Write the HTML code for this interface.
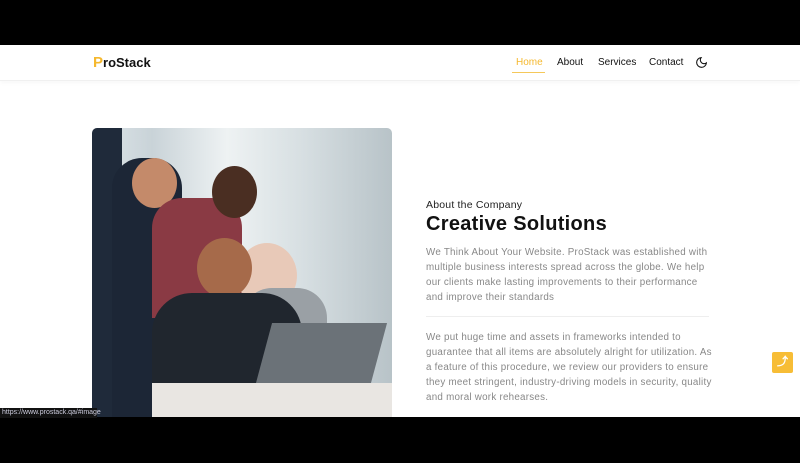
<!DOCTYPE html>
<html><head><meta charset="utf-8"><style>
*{margin:0;padding:0;box-sizing:border-box}
body{width:800px;height:463px;background:#000;position:relative;overflow:hidden;font-family:"Liberation Sans",sans-serif}
.page{position:absolute;top:45px;left:0;width:800px;height:372px;background:#fff;overflow:hidden}
.nav{height:36px;border-bottom:1px solid #f0f0f0;box-shadow:0 2px 4px rgba(0,0,0,.03);position:relative}
.logo{position:absolute;left:93px;top:9px;font-weight:bold;font-size:13px;color:#111}
.logo b{color:#f5b82e;font-size:15px}
.links{position:absolute;top:12px;font-size:10px;color:#111}
.links span{position:absolute;white-space:nowrap}
.img{position:absolute;left:92px;top:83px;width:300px;height:300px;border-radius:5px 5px 0 0;overflow:hidden;
background:linear-gradient(90deg,#dfe6ea 0%,#c9d3d8 20%,#eef2f3 45%,#d7dfe2 70%,#b8c3c8 100%)}
.t{position:absolute;left:426px;color:#888;font-size:9.8px;line-height:15px;white-space:nowrap;letter-spacing:.25px}
</style></head><body>
<div class="page">
<div class="nav">
<div class="logo"><b>P</b>roStack</div>
<div class="links">
<span style="left:516px;color:#f5b82e">Home</span>
<span style="left:557px">About</span>
<span style="left:598px">Services</span>
<span style="left:649px">Contact</span>
</div>
<div style="position:absolute;left:512px;top:27px;width:33px;height:1px;background:#f5c85a"></div>
<svg style="position:absolute;left:695px;top:11px" width="13" height="13" viewBox="0 0 24 24" fill="none" stroke="#111" stroke-width="2"><path d="M21 12.8A9 9 0 1 1 11.2 3a7 7 0 0 0 9.8 9.8z"/></svg>
</div>
<div class="img">
<div style="position:absolute;left:0;top:0;width:30px;height:300px;background:#1f2a3a"></div>
<div style="position:absolute;left:20px;top:30px;width:70px;height:270px;background:#1c2636;border-radius:30px 30px 0 0"></div>
<div style="position:absolute;left:40px;top:30px;width:45px;height:50px;background:#c48a6a;border-radius:50%"></div>
<div style="position:absolute;left:60px;top:70px;width:90px;height:120px;background:#8a3a44;border-radius:30px 30px 0 0"></div>
<div style="position:absolute;left:120px;top:38px;width:45px;height:52px;background:#4a2e22;border-radius:50%"></div>
<div style="position:absolute;left:145px;top:115px;width:60px;height:65px;background:#e8c9b8;border-radius:50%"></div>
<div style="position:absolute;left:150px;top:160px;width:85px;height:110px;background:#9aa0a5;border-radius:30px 30px 0 0"></div>
<div style="position:absolute;left:105px;top:110px;width:55px;height:60px;background:#a66a4a;border-radius:50%"></div>
<div style="position:absolute;left:60px;top:165px;width:150px;height:135px;background:#20262e;border-radius:40px 40px 0 0"></div>
<div style="position:absolute;left:170px;top:195px;width:115px;height:75px;background:#6b7278;transform:skewX(-15deg)"></div>
<div style="position:absolute;left:60px;top:255px;width:240px;height:45px;background:#e9e6e2"></div>
</div>
<div class="t" style="top:153px;color:#222;font-size:10.5px;letter-spacing:.2px">About the Company</div>
<div class="t" style="top:166px;color:#111;font-size:20px;font-weight:bold;line-height:26px;letter-spacing:.3px">Creative Solutions</div>
<div class="t" style="top:200px">We Think About Your Website. ProStack was established with<br>multiple business interests spread across the globe. We help<br>our clients make lasting improvements to their performance<br>and improve their standards</div>
<div style="position:absolute;left:426px;top:271px;width:283px;height:1px;background:#eee"></div>
<div class="t" style="top:285px">We put huge time and assets in frameworks intended to<br>guarantee that all items are absolutely alright for utilization. As<br>a feature of this procedure, we review our providers to ensure<br>they meet stringent, industry-driving models in security, quality<br>and moral work rehearses.</div>
<div style="position:absolute;left:772px;top:307px;width:21px;height:21px;background:#f7bd36;border-radius:2px;color:#fff;font-size:11px;font-weight:bold;text-align:center;line-height:21px">⤴</div>
</div>
<div style="position:absolute;left:0;top:408px;width:97px;height:10px;background:#111;color:#ccd;font-size:7px;line-height:10px;padding-left:2px">https://www.prostack.qa/#image</div>
</body></html>
